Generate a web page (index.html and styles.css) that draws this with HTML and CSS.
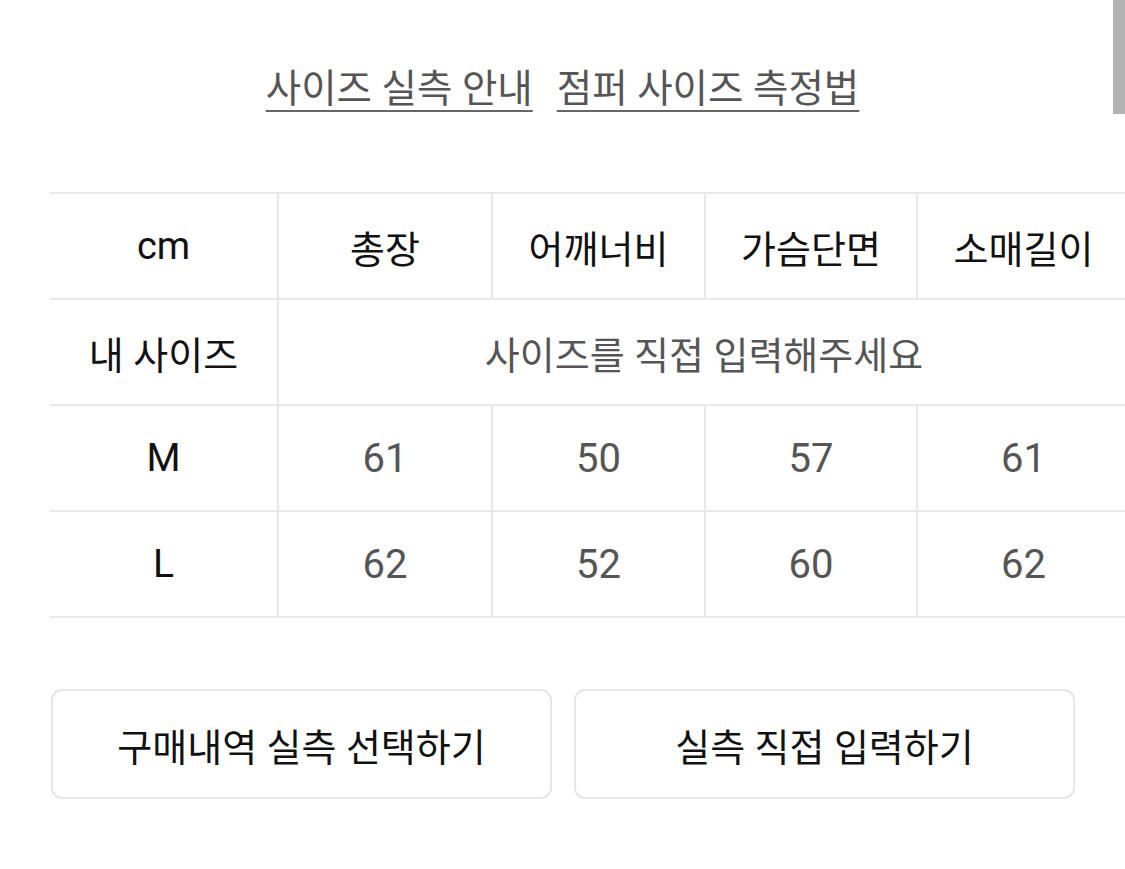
FILE: index.html
```html
<!DOCTYPE html>
<html lang="ko">
<head>
<meta charset="utf-8">
<link rel="stylesheet" href="styles.css">
</head>
<body>
<div class="scrollbar"></div>
<div class="page">
  <nav class="links">
    <a class="link" href="#">사이즈 실측 안내</a>
    <a class="link" href="#">점퍼 사이즈 측정법</a>
  </nav>
  <div class="size-table">
    <div class="cell head first">cm</div>
    <div class="cell head">총장</div>
    <div class="cell head">어깨너비</div>
    <div class="cell head">가슴단면</div>
    <div class="cell head">소매길이</div>

    <div class="cell head first">내 사이즈</div>
    <div class="cell value span">사이즈를 직접 입력해주세요</div>

    <div class="cell head first latin">M</div>
    <div class="cell value num">61</div>
    <div class="cell value num">50</div>
    <div class="cell value num">57</div>
    <div class="cell value num">61</div>

    <div class="cell head first latin">L</div>
    <div class="cell value num">62</div>
    <div class="cell value num">52</div>
    <div class="cell value num">60</div>
    <div class="cell value num">62</div>
  </div>
  <div class="actions">
    <button class="btn">구매내역 실측 선택하기</button>
    <button class="btn">실측 직접 입력하기</button>
  </div>
</div>
</body>
</html>
```

FILE: styles.css
```css
html, body {
  margin: 0;
  padding: 0;
  background: #fff;
  overflow: hidden;
}
body {
  width: 1125px;
  height: 869px;
  position: relative;
  font-family: Roboto, "Noto Sans CJK KR", sans-serif;
}
.scrollbar {
  position: absolute;
  right: 0;
  top: 0;
  width: 12px;
  height: 114px;
  background: #b3b3b3;
}
.page {
  padding-top: 65px;
}
.links {
  display: flex;
  justify-content: center;
  gap: 24px;
  height: 48px;
}
.link {
  color: #555;
  font-size: 38.5px;
  line-height: 48px;
  text-decoration: underline;
  text-decoration-thickness: 2px;
  text-underline-offset: 8px;
  text-decoration-color: #666;
}
.size-table {
  margin-top: 79px;
  margin-left: 50px;
  width: 1079px;
  display: grid;
  grid-template-columns: 227px 214px 213px 212px 213px;
  grid-auto-rows: 106px;
  border-top: 2px solid #e8e8e8;
}
.cell {
  display: flex;
  align-items: center;
  justify-content: center;
  border-bottom: 2px solid #e8e8e8;
  border-left: 2px solid #e8e8e8;
  font-size: 38px;
}
.cell.first {
  border-left: none;
}
.head {
  color: #111;
}
.value {
  color: #555;
}
.num {
  font-size: 40px;
}
.latin {
  font-size: 39px;
}
.span {
  grid-column: 2 / 6;
}
.actions {
  display: flex;
  gap: 22px;
  margin-top: 71px;
  margin-left: 51px;
}
.btn {
  width: 501px;
  height: 110px;
  background: #fff;
  border: 2px solid #e6e6e8;
  border-radius: 11px;
  font-family: Roboto, "Noto Sans CJK KR", sans-serif;
  font-size: 38px;
  color: #111;
  padding: 0;
}
```
